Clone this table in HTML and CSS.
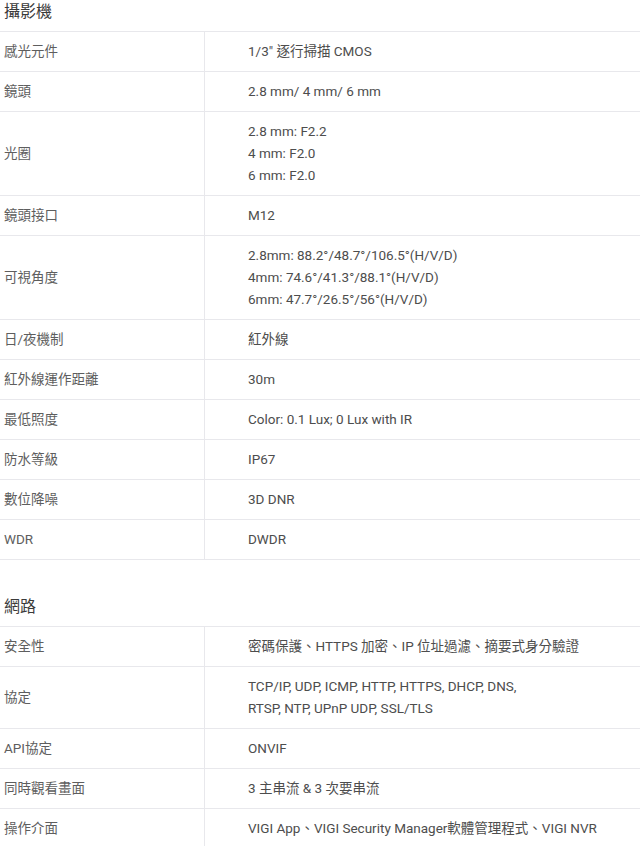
FILE: index.html
```html
<!DOCTYPE html>
<html lang="zh-Hant">
<head>
<meta charset="utf-8">
<link rel="stylesheet" href="styles.css">
</head>
<body>
<section class="spec">
  <h2 class="spec-title">攝影機</h2>
  <table class="spec-table">
    <tr><th>感光元件</th><td>1/3" 逐行掃描 CMOS</td></tr>
    <tr><th>鏡頭</th><td>2.8 mm/ 4 mm/ 6 mm</td></tr>
    <tr><th>光圈</th><td>2.8 mm: F2.2<br>4 mm: F2.0<br>6 mm: F2.0</td></tr>
    <tr><th>鏡頭接口</th><td>M12</td></tr>
    <tr><th>可視角度</th><td>2.8mm: 88.2°/48.7°/106.5°(H/V/D)<br>4mm: 74.6°/41.3°/88.1°(H/V/D)<br>6mm: 47.7°/26.5°/56°(H/V/D)</td></tr>
    <tr><th>日/夜機制</th><td>紅外線</td></tr>
    <tr><th>紅外線運作距離</th><td>30m</td></tr>
    <tr><th>最低照度</th><td>Color: 0.1 Lux; 0 Lux with IR</td></tr>
    <tr><th>防水等級</th><td>IP67</td></tr>
    <tr><th>數位降噪</th><td>3D DNR</td></tr>
    <tr><th>WDR</th><td>DWDR</td></tr>
  </table>
</section>
<section class="spec spec-next">
  <h2 class="spec-title">網路</h2>
  <table class="spec-table">
    <tr><th>安全性</th><td>密碼保護、HTTPS 加密、IP 位址過濾、摘要式身分驗證</td></tr>
    <tr><th>協定</th><td>TCP/IP, UDP, ICMP, HTTP, HTTPS, DHCP, DNS,<br>RTSP, NTP, UPnP UDP, SSL/TLS</td></tr>
    <tr><th>API協定</th><td>ONVIF</td></tr>
    <tr><th>同時觀看畫面</th><td>3 主串流 &amp; 3 次要串流</td></tr>
    <tr><th>操作介面</th><td>VIGI App、VIGI Security Manager軟體管理程式、VIGI NVR</td></tr>
  </table>
</section>
</body>
</html>
```
FILE: styles.css
```css
html, body {
  margin: 0;
  padding: 0;
  background: #ffffff;
}
body {
  font-family: Roboto, "Noto Sans CJK TC", sans-serif;
  color: #4d4d4d;
}
.spec-next {
  margin-top: 35px;
}
.spec-title {
  margin: 0;
  padding: 0 0 7px 4px;
  font-size: 16px;
  line-height: 24px;
  font-weight: 400;
  color: #3a3a3a;
  border-bottom: 1px solid #e8e8ec;
}
.spec-table {
  width: 100%;
  border-collapse: collapse;
  font-size: 13.5px;
  line-height: 22px;
}
.spec-table th,
.spec-table td {
  border-bottom: 1px solid #e8e8ec;
  padding: 8px 0 9px;
  vertical-align: middle;
  text-align: left;
  font-weight: 400;
}
.spec-table th {
  width: 200px;
  padding-left: 4px;
  color: #5e5e5e;
  border-right: 1px solid #e8e8ec;
}
.spec-table td {
  padding-left: 43px;
  color: #4d4d4d;
}
```
